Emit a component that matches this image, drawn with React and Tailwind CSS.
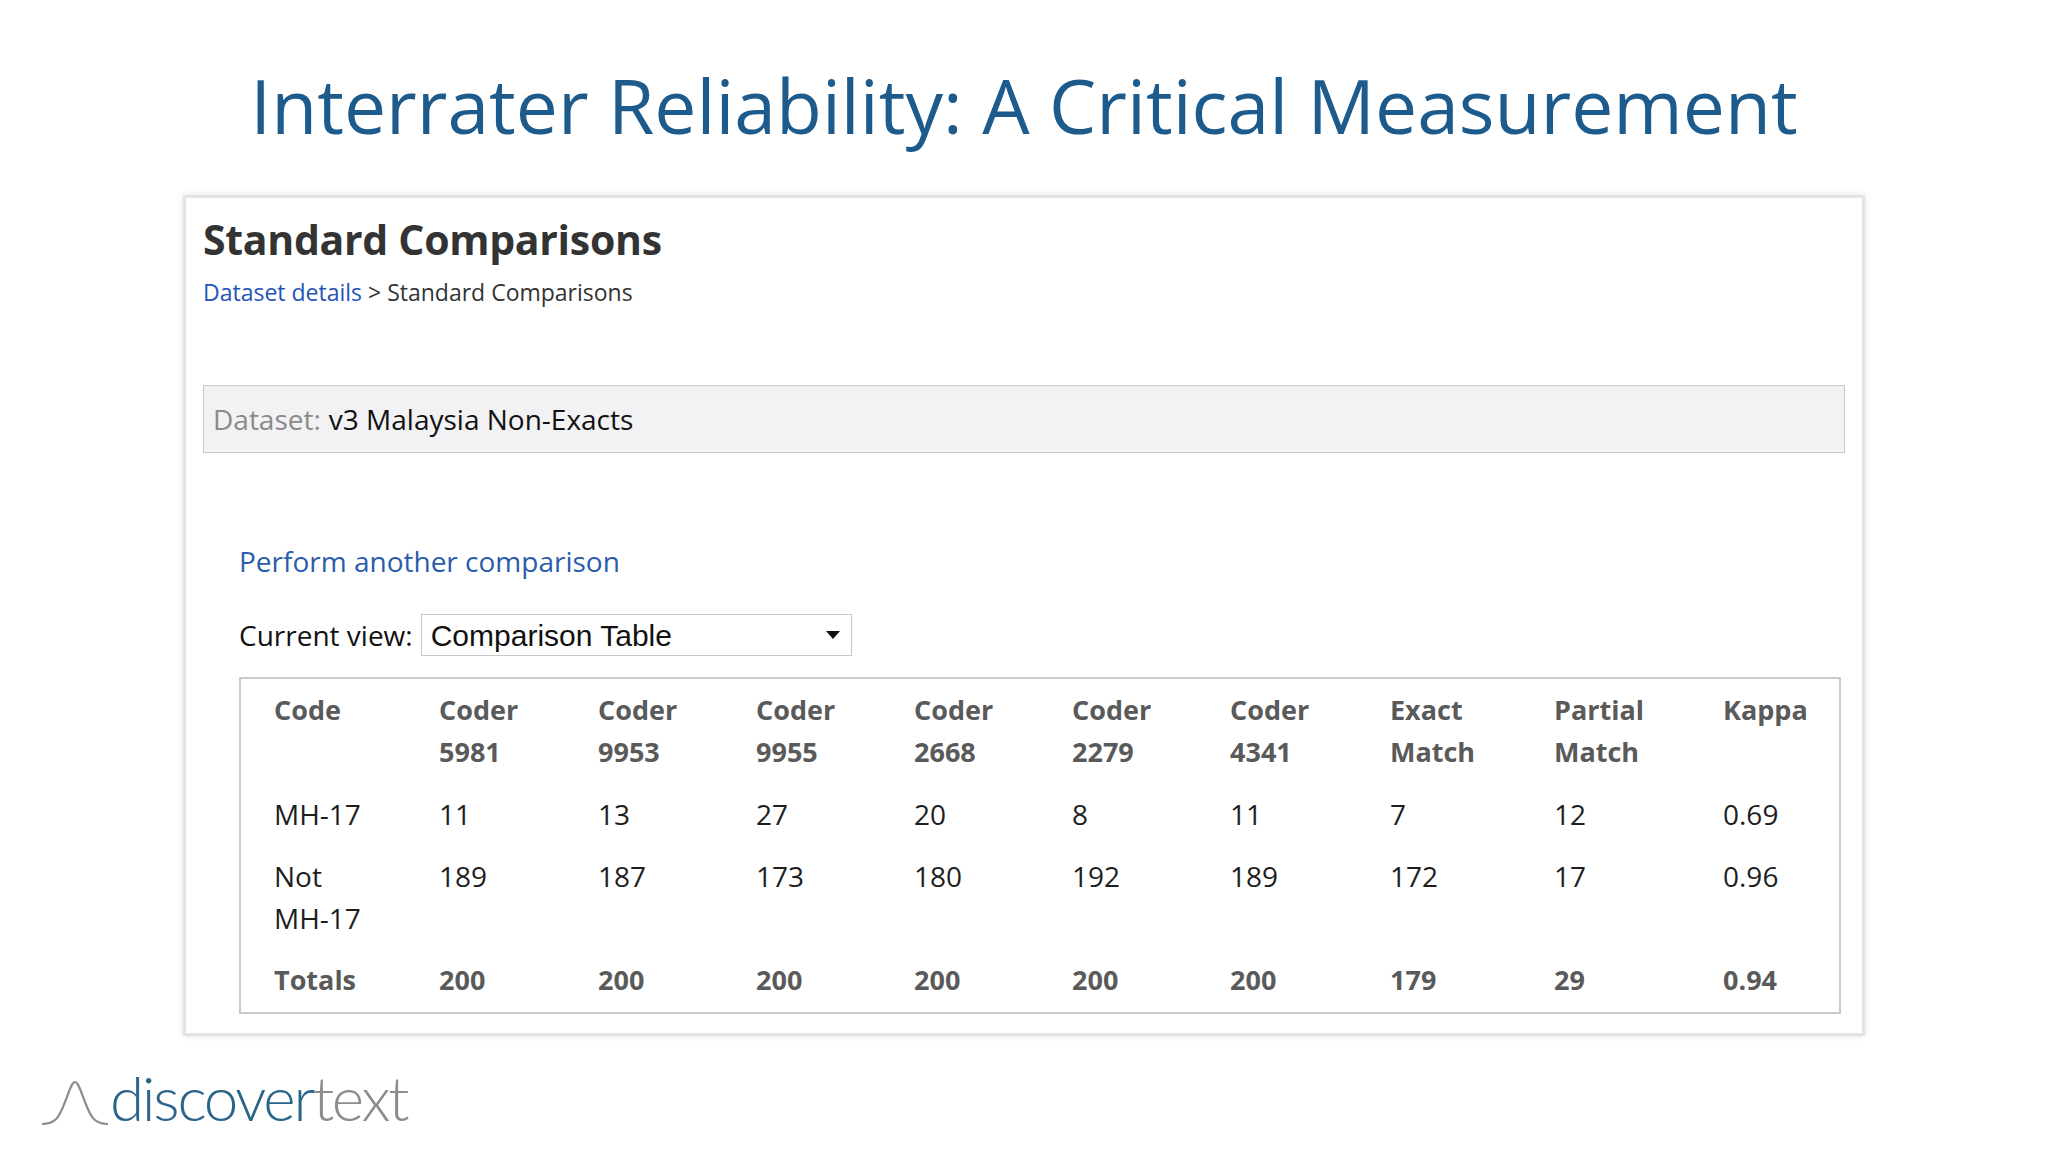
import React from "react";

const cols = ["Code", "Coder 5981", "Coder 9953", "Coder 9955", "Coder 2668", "Coder 2279", "Coder 4341", "Exact Match", "Partial Match", "Kappa"];
const widths = ["w-[198px]", "w-[159px]", "w-[158px]", "w-[158px]", "w-[158px]", "w-[158px]", "w-[160px]", "w-[164px]", "w-[169px]", "flex-1"];

const rows = [
  ["MH-17", "11", "13", "27", "20", "8", "11", "7", "12", "0.69"],
  ["Not MH-17", "189", "187", "173", "180", "192", "189", "172", "17", "0.96"],
];
const totals = ["Totals", "200", "200", "200", "200", "200", "200", "179", "29", "0.94"];

function Row({ cells, bold }) {
  return (
    <div className={`flex ${bold ? "font-bold text-[#5a5a5a] text-[27px]" : "text-[#1e1e1e] text-[28px]"}`}>
      {cells.map((c, i) => (
        <div key={i} className={`${widths[i]} shrink-0 py-[10px] ${i === 0 ? "pl-[33px] pr-2" : "pr-4"}`}>
          {c.split(" ").map((w, j) => (
            <div key={j}>{w}</div>
          ))}
        </div>
      ))}
    </div>
  );
}

function Logo() {
  return (
    <div className="flex items-end ml-[40px] mt-[30px]">
      <svg width="70" height="48" viewBox="0 0 70 48" className="-mb-[9px]">
        <path
          d="M2 46 C 15 46, 19 40, 25 24 C 30 11, 32 4, 35 4 C 38 4, 40 11, 45 24 C 51 40, 55 46, 68 46"
          fill="none"
          stroke="#8a8f94"
          strokeWidth="2.2"
        />
      </svg>
      <div className="font-['Lato',sans-serif] font-light text-[62px] leading-none tracking-[-2.3px] -mb-[11px]">
        <span className="text-[#2a6489]">discover</span>
        <span className="text-[#8c8c8c]">text</span>
      </div>
    </div>
  );
}

export default function App() {
  return (
    <div className="w-[2048px] h-[1152px] bg-white overflow-hidden flex flex-col font-['Open_Sans',sans-serif]">
      <h1 className="text-center text-[75px] leading-none font-normal text-[#1d5b8c] mt-[68px]">
        Interrater Reliability: A Critical Measurement
      </h1>

      <div className="mx-auto mt-[52px] w-[1682px] h-[841px] border-[3px] border-[#e3e3e5] shadow-[0_0_6px_rgba(0,0,0,0.12)] bg-white px-[17px] pt-[21px] flex flex-col">
        <h2 className="text-[41px] leading-none font-bold text-[#333333] tracking-[-0.3px]">Standard Comparisons</h2>
        <div className="mt-[16px] text-[23px] leading-[1.4] text-[#333]">
          <span className="text-[#2553b8]">Dataset details</span> &gt; Standard Comparisons
        </div>

        <div className="mt-[77px] h-[68px] border border-[#c9c9c9] bg-[#f2f1f3] flex items-center pl-[9px] text-[28px]">
          <span className="text-[#8a8a8a]">Dataset:</span>
          <span className="text-[#111] ml-[8px]">v3 Malaysia Non-Exacts</span>
        </div>

        <div className="ml-[36px] mr-[4px] flex flex-col">
          <div className="mt-[89px] text-[28px] leading-[1.4] text-[#2a5cab]">Perform another comparison</div>

          <div className="mt-[33px] flex items-center">
            <span className="text-[28px] text-[#111]">Current view:</span>
            <div className="ml-[8px] w-[431px] h-[42px] border border-[#c8c8c8] flex items-center justify-between pl-[9px] pr-[11px] font-['Liberation_Sans',sans-serif] text-[30px] text-[#111]">
              <span>Comparison Table</span>
              <svg width="14" height="8" viewBox="0 0 14 8">
                <path d="M0 0 L14 0 L7 8 Z" fill="#111" />
              </svg>
            </div>
          </div>

          <div className="mt-[21px] border-2 border-[#cbcbcb] leading-[42px] pb-[1px]">
            <Row cells={cols} bold />
            {rows.map((r, i) => (
              <Row key={i} cells={r} />
            ))}
            <Row cells={totals} bold />
          </div>
        </div>
      </div>

      <Logo />
    </div>
  );
}
